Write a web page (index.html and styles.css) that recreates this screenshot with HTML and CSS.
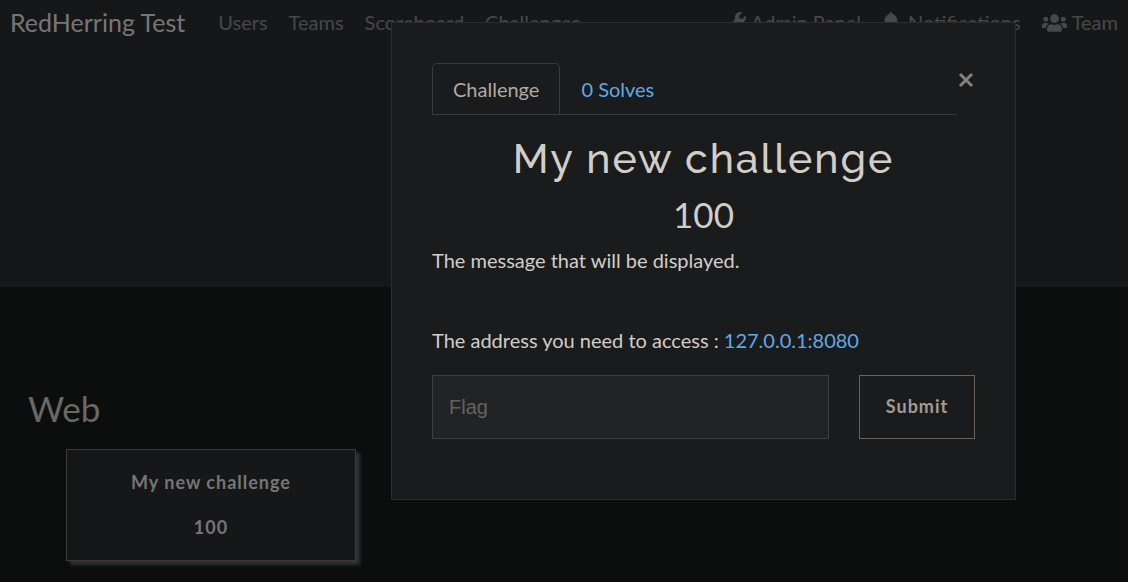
FILE: index.html
```html
<!DOCTYPE html>
<html lang="en">
<head>
<meta charset="utf-8">
<title>RedHerring Test</title>
<link rel="stylesheet" href="styles.css">
</head>
<body>
<header class="hero">
  <nav class="navbar">
    <a class="brand" href="#">RedHerring Test</a>
    <div class="nav-group">
      <a class="nav-link" href="#">Users</a>
      <a class="nav-link" href="#">Teams</a>
      <a class="nav-link" href="#">Scoreboard</a>
      <a class="nav-link" href="#">Challenges</a>
    </div>
    <div class="nav-group nav-end">
      <a class="nav-link" href="#"><svg class="icon icon-wrench" viewBox="0 0 512 512" aria-hidden="true"><path d="M507.700 109.100c-2.200-9-13.500-12.100-20.100-5.500l-74.400 74.400-67.900-11.300L334 98.900l74.400-74.400c6.600-6.600 3.400-17.900-5.700-20.200-47.400-11.700-99.600.9-136.600 37.900-39.600 39.600-50.500 97.100-34.100 147.200L18.700 402.800c-25 25-25 65.500 0 90.500s65.500 25 90.500 0l213.200-213.200c50.100 16.700 107.500 5.700 147.400-34.200 37.100-37.100 49.700-89.300 37.900-136.800zM64 472c-13.300 0-24-10.700-24-24 0-13.300 10.700-24 24-24s24 10.700 24 24c0 13.300-10.700 24-24 24z"/></svg>Admin Panel</a>
      <a class="nav-link" href="#"><svg class="icon icon-bell" viewBox="0 0 448 512" aria-hidden="true"><path d="M224 512c35.300 0 64-28.700 64-64H160c0 35.300 28.600 64 64 64zm215.400-149.700c-19.300-20.800-55.500-52-55.500-154.300 0-77.700-54.500-139.900-127.900-155.200V32c0-17.700-14.300-32-32-32s-32 14.300-32 32v20.800C118.600 68.100 64.100 130.300 64.100 208c0 102.300-36.200 133.500-55.500 154.300-6 6.400-8.700 14.100-8.600 21.700.1 16.400 13 32 32.100 32h383.800c19.100 0 32-15.600 32.100-32 .1-7.600-2.600-15.300-8.600-21.700z"/></svg>Notifications</a>
      <a class="nav-link" href="#"><svg class="icon icon-users" viewBox="0 0 640 512" aria-hidden="true"><path d="M96 224c35.300 0 64-28.700 64-64s-28.700-64-64-64-64 28.700-64 64 28.700 64 64 64zm448 0c35.300 0 64-28.700 64-64s-28.700-64-64-64-64 28.700-64 64 28.700 64 64 64zm32 32h-64c-17.600 0-33.500 7.100-45.100 18.600 40.300 22.100 68.900 62 75.100 109.400h66c17.700 0 32-14.300 32-32v-32c0-35.300-28.700-64-64-64zm-256 0c61.900 0 112-50.100 112-112S381.900 32 320 32 208 82.100 208 144s50.100 112 112 112zm76.800 32h-8.300c-20.800 10-43.900 16-68.500 16s-47.600-6-68.500-16h-8.300C179.600 288 128 339.600 128 403.200V432c0 26.500 21.500 48 48 48h288c26.500 0 48-21.500 48-48v-28.800c0-63.600-51.600-115.200-115.200-115.200zm-223.700-13.400C161.500 263.100 145.600 256 128 256H64c-35.300 0-64 28.700-64 64v32c0 17.700 14.300 32 32 32h65.900c6.300-47.400 34.900-87.300 75.200-109.400z"/></svg>Team</a>
    </div>
  </nav>
</header>
<main class="board">
  <h2 class="category">Web</h2>
  <button class="card" type="button"><span>My new challenge</span><span>100</span></button>
</main>
<div class="overlay">
  <section class="modal" role="dialog" aria-modal="true" aria-labelledby="challenge-title">
    <div class="modal-top">
      <div class="tabs" role="tablist">
        <button class="tab tab-active" type="button" role="tab" aria-selected="true">Challenge</button>
        <button class="tab" type="button" role="tab" aria-selected="false">0 Solves</button>
      </div>
      <button class="close" type="button" aria-label="Close"><svg class="close-icon" viewBox="0 0 16 16" aria-hidden="true"><path d="M2 2l12 12M14 2L2 14"/></svg></button>
    </div>
    <h1 class="title" id="challenge-title">My new challenge</h1>
    <h2 class="points">100</h2>
    <p class="message">The message that will be displayed.</p>
    <p class="address">The address you need to access : <a class="link" href="#">127.0.0.1:8080</a></p>
    <form class="flag-form">
      <input class="flag" type="text" placeholder="Flag" aria-label="Flag">
      <button class="submit" type="button">Submit</button>
    </form>
  </section>
</div>
</body>
</html>
```
FILE: styles.css
```css
* { box-sizing: border-box; }
body {
  margin: 0;
  min-height: 100vh;
  position: relative;
  background: #0c0e0d;
  color: #d1cdc7;
  font: 20px/30px Lato, "Liberation Sans", sans-serif;
}
a { text-decoration: none; }
button, input { font: inherit; color: inherit; margin: 0; }
h1, h2, p { margin: 0; font-weight: 400; }

.hero { min-height: 287px; background: #161719; }
.navbar { display: flex; align-items: center; padding: 3px 10px; white-space: nowrap; }
.brand { font-size: 25px; line-height: 38px; color: #777675; margin-right: 33px; }
.nav-group { display: flex; gap: 21px; }
.nav-end { margin-left: auto; }
.nav-link { color: #484848; }
.icon { height: 20px; fill: currentColor; vertical-align: -2px; }
.icon-wrench { width: 20px; margin-right: 5px; }
.icon-bell { width: 18px; margin-right: 8px; }
.icon-users { width: 25px; margin-right: 5px; vertical-align: -3px; }

.board { padding: 100px 28px 20px; }
.category { font-size: 35px; line-height: 42px; color: #696865; margin-bottom: 20px; }
.card {
  display: flex;
  flex-direction: column;
  align-items: center;
  gap: 15px;
  width: 290px;
  margin-left: 38px;
  padding: 17px 20px 18px;
  border: 1px solid #403934;
  background: #161719;
  box-shadow: 4px 4px 3px #303133;
  color: #777675;
  font-size: 18px;
  font-weight: 700;
  letter-spacing: 1px;
}

.overlay {
  position: absolute;
  inset: 0;
  padding: 22px 112px 22px 20px;
}
.modal {
  max-width: 625px;
  margin-left: auto;
  padding: 40px 40px 60px;
  border: 1px solid #2b2d2e;
  background: #1a1b1d;
}
.modal-top { display: flex; align-items: flex-start; }
.tabs { display: flex; flex: 1; border-bottom: 1px solid #363b3d; }
.tab {
  padding: 10px 20px;
  border: 1px solid transparent;
  border-bottom: 0;
  border-radius: 5px 5px 0 0;
  background: none;
  color: #62a8e5;
}
.tab-active { border-color: #363b3d; color: #b1aaa0; }
.close { display: flex; padding: 9px 1px; border: 0; background: none; }
.close-icon { width: 16px; height: 16px; fill: none; stroke: #85827d; stroke-width: 3; }
.title {
  margin-top: 20px;
  font-family: Raleway, Lato, sans-serif;
  font-size: 41px;
  font-weight: 500;
  line-height: 48px;
  letter-spacing: 2px;
  text-align: center;
}
.points { margin: 10px 0; font-size: 35px; line-height: 42px; text-align: center; }
.message { margin-bottom: 50px; }
.address { margin-bottom: 20px; }
.link { color: #62a8e5; }
.flag-form { display: flex; gap: 30px; }
.flag {
  flex: 1;
  min-width: 0;
  height: 64px;
  padding: 0 16px;
  border: 1px solid #3a4042;
  border-radius: 0;
  background: #202426;
  font-family: "Liberation Sans", sans-serif;
}
.flag::placeholder { color: #66625b; opacity: 1; }
.submit {
  width: 116px;
  padding: 0 0 2px;
  border: 1px solid #6c6154;
  background: none;
  color: #a49c91;
  font-size: 18px;
  font-weight: 700;
  letter-spacing: 1px;
}
```
